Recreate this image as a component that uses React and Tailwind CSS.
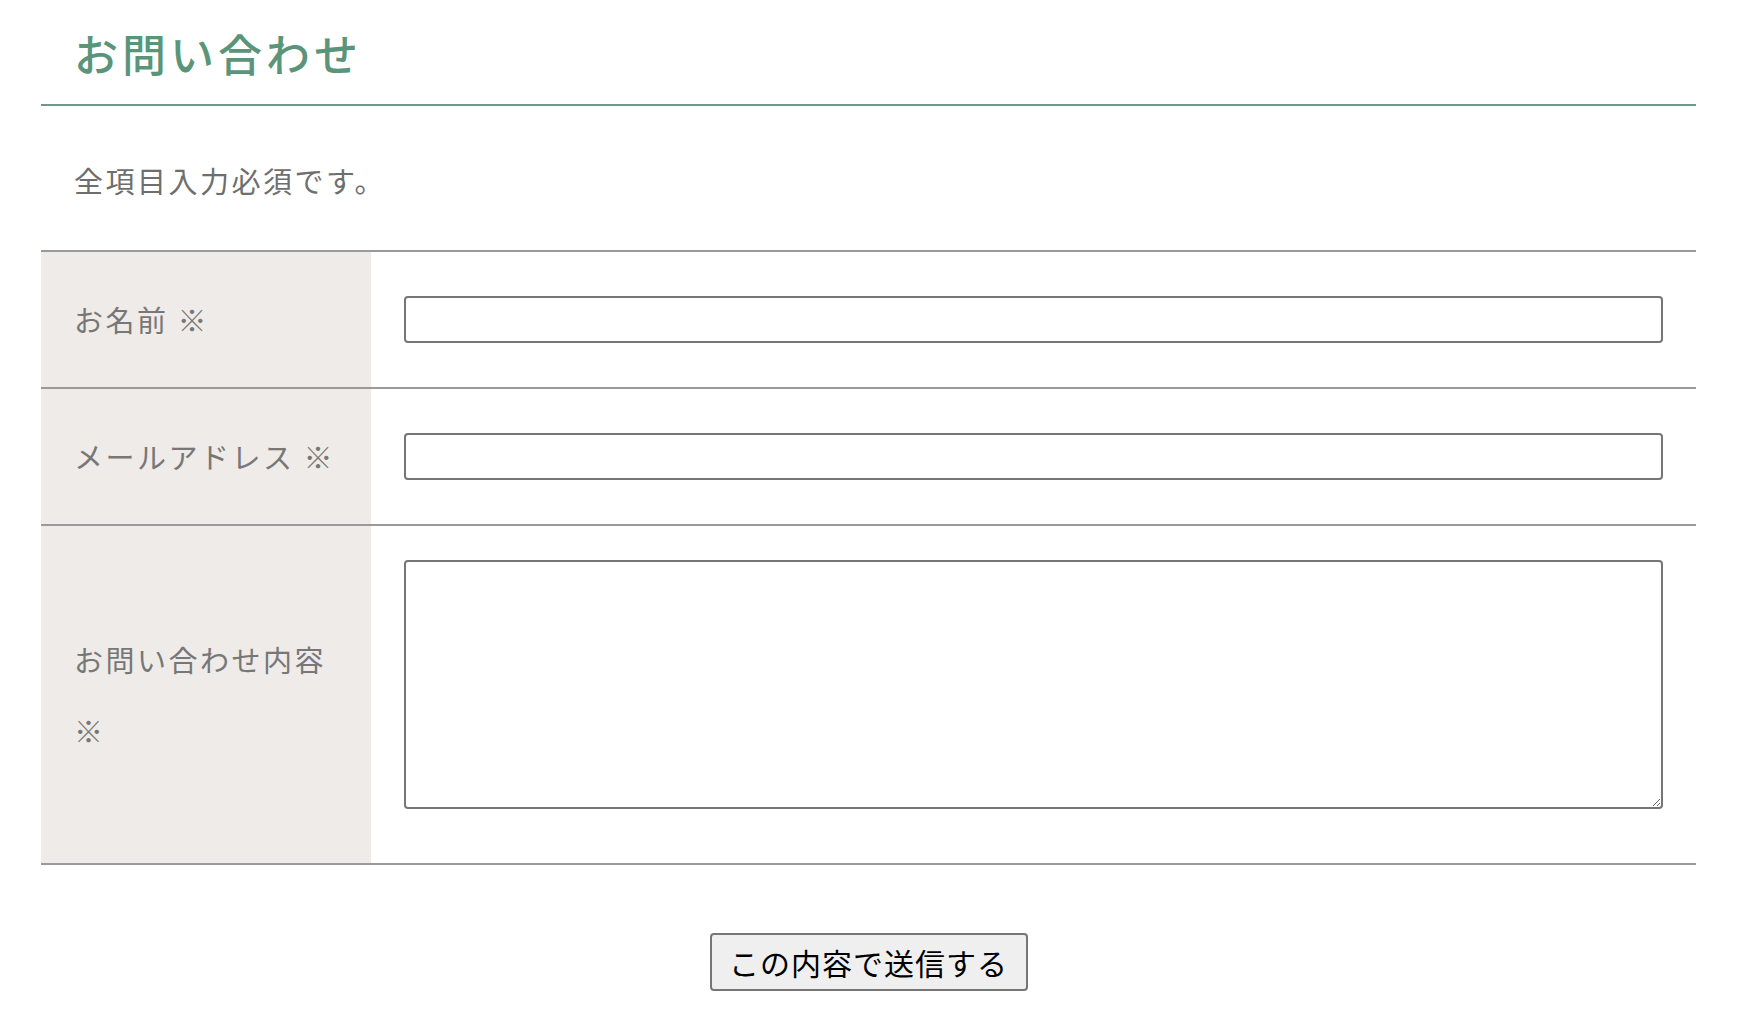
import React from 'react';

const font = { fontFamily: '"Noto Sans CJK JP", "Noto Sans", sans-serif' };

const rows = [
  { label: 'お名前 ※', type: 'input' },
  { label: 'メールアドレス ※', type: 'input' },
  { label: 'お問い合わせ内容 ※', type: 'textarea' },
];

export default function App() {
  return (
    <div className="min-h-[1030px] bg-white font-['Noto_Sans_CJK_JP',sans-serif] text-[#777]">
      <div className="mx-[41px] pt-[22px]">
        {/* HEADER */}
        <h1 className="px-[33px] pb-[20px] text-[44px] leading-[62px] tracking-[4px] text-[#5b9579] font-medium border-b-2 border-[#6d9a88]">
          お問い合わせ
        </h1>

        <p className="px-[33px] pt-[61px] pb-[57px] text-[29px] leading-[26px] tracking-[2.5px] text-[#6e6e6e]">
          全項目入力必須です。
        </p>

        {/* FORM */}
        <div className="border-t-2 border-[#9a9a9a]">
          {rows.map((row) => (
            <div key={row.label} className="flex border-b-2 border-[#9a9a9a]">
              <div className="w-[330px] shrink-0 bg-[#efebe8] pl-[33px] pr-[14px] py-[32px] flex items-center">
                <span className="block text-[29px] leading-[71px] tracking-[2.5px] text-[#777]">
                  {row.label}
                </span>
              </div>
              {row.type === 'input' ? (
                <div className="flex-1 px-[33px] flex items-center">
                  <input
                    type="text"
                    className="w-full h-[47px] border-2 border-[#767676] rounded-[4px] bg-white px-2"
                  />
                </div>
              ) : (
                <div className="flex-1 px-[33px] pt-[34px] pb-[54px]">
                  <textarea className="block w-full h-[249px] border-2 border-[#767676] rounded-[4px] bg-white p-2 resize-y" />
                </div>
              )}
            </div>
          ))}
        </div>

        <div className="flex justify-center pt-[68px]">
          <button
            className="w-[318px] h-[58px] bg-[#efefef] border-2 border-[#767676] rounded-[4px] text-[30px] leading-none tracking-[1px] text-black"
            style={font}
          >
            この内容で送信する
          </button>
        </div>
      </div>
    </div>
  );
}
